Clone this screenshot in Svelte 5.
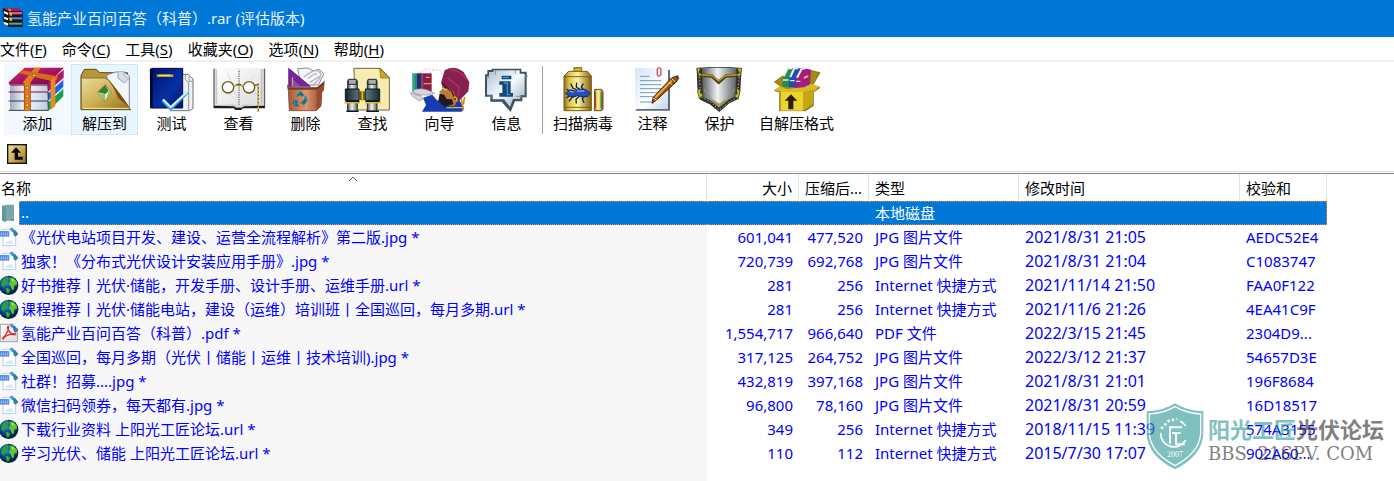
<script lang="ts">
    type Kind = 'jpg' | 'url' | 'pdf';

    const menus = [
        { label: '文件', key: 'F' },
        { label: '命令', key: 'C' },
        { label: '工具', key: 'S' },
        { label: '收藏夹', key: 'O' },
        { label: '选项', key: 'N' },
        { label: '帮助', key: 'H' }
    ];

    // origin is the left edge of each icon's own drawing space
    const archiveTools = [
        { icon: 'add', label: '添加', origin: 28 },
        { icon: 'extract', label: '解压到', origin: 229 },
        { icon: 'test', label: '测试', origin: 430 },
        { icon: 'view', label: '查看', origin: 16 },
        { icon: 'delete', label: '删除', origin: 217 },
        { icon: 'find', label: '查找', origin: 418 },
        { icon: 'wizard', label: '向导', origin: 49 },
        { icon: 'info', label: '信息', origin: 250 }
    ];

    const extraTools = [
        { icon: 'scan', label: '扫描病毒', origin: 45 },
        { icon: 'comment', label: '注释', origin: 253 },
        { icon: 'protect', label: '保护', origin: 4 },
        { icon: 'sfx', label: '自解压格式', origin: 234 }
    ];

    const typeNames = { jpg: 'JPG 图片文件', url: 'Internet 快捷方式', pdf: 'PDF 文件' };

    const files: { kind: Kind; name: string; size: string; packed: string; modified: string; crc: string }[] = [
        { kind: 'jpg', name: '《光伏电站项目开发、建设、运营全流程解析》第二版.jpg *', size: '601,041', packed: '477,520', modified: '2021/8/31 21:05', crc: 'AEDC52E4' },
        { kind: 'jpg', name: '独家！《分布式光伏设计安装应用手册》.jpg *', size: '720,739', packed: '692,768', modified: '2021/8/31 21:04', crc: 'C1083747' },
        { kind: 'url', name: '好书推荐丨光伏·储能，开发手册、设计手册、运维手册.url *', size: '281', packed: '256', modified: '2021/11/14 21:50', crc: 'FAA0F122' },
        { kind: 'url', name: '课程推荐丨光伏·储能电站，建设（运维）培训班丨全国巡回，每月多期.url *', size: '281', packed: '256', modified: '2021/11/6 21:26', crc: '4EA41C9F' },
        { kind: 'pdf', name: '氢能产业百问百答（科普）.pdf *', size: '1,554,717', packed: '966,640', modified: '2022/3/15 21:45', crc: '2304D9...' },
        { kind: 'jpg', name: '全国巡回，每月多期（光伏丨储能丨运维丨技术培训).jpg *', size: '317,125', packed: '264,752', modified: '2022/3/12 21:37', crc: '54657D3E' },
        { kind: 'jpg', name: '社群！招募....jpg *', size: '432,819', packed: '397,168', modified: '2021/8/31 21:01', crc: '196F8684' },
        { kind: 'jpg', name: '微信扫码领券，每天都有.jpg *', size: '96,800', packed: '78,160', modified: '2021/8/31 20:59', crc: '16D18517' },
        { kind: 'url', name: '下载行业资料 上阳光工匠论坛.url *', size: '349', packed: '256', modified: '2018/11/15 11:39', crc: '574A3155' },
        { kind: 'url', name: '学习光伏、储能 上阳光工匠论坛.url *', size: '110', packed: '112', modified: '2015/7/30 17:07', crc: '902A60...' }
    ];
</script>

{#snippet toolButton(tool)}
    <button class="tool {tool.icon}">
        <svg width="56" height="45" viewBox="{tool.origin} 20 168 135" aria-hidden="true">
            {#if tool.icon === 'add'}
                <path d="M140 124L188 84V108L143 152Z" fill="#12a04e" />
                <path d="M140 97L188 57V80L143 122Z" fill="#1f63e0" />
                <path d="M138 70L189 28V52L143 95Z" fill="#b01869" />
                <path d="M28 72H140V150H28Z" fill="url(#pages)" />
                <path d="M24 66L72 22H190L140 72H28Z" fill="url(#magenta)" />
                <path d="M24 69L30 74H140" fill="none" stroke="#5e0737" stroke-width="3" />
                <path d="M24 95H142" stroke="#7c0b45" stroke-width="3" />
                <path d="M24 122H142" stroke="#16367c" stroke-width="3" />
                <path d="M24 150H142" stroke="#1b4a35" stroke-width="3" />
                <path d="M142 72V151" stroke="#1b2940" stroke-width="2" />
                <path d="M144 96L188 56M144 123L188 83" stroke="#dfe5f2" stroke-width="4" />
                <path d="M67 66L102 22H121L90 66V151H70V70Z" fill="#e57a1e" />
                <path d="M54 38L66 30L172 48L168 58L152 62Z" fill="#d56a17" />
                <path d="M150 60L164 49V137L150 149Z" fill="#e98b25" />
                <path d="M71 70V150M89 70V150" stroke="#8c3e08" stroke-width="2" />
                <g fill="#ffe36b" stroke="#8b6910" stroke-width="2">
                    <rect x="76" y="78" width="7" height="8" /><rect x="76" y="104" width="7" height="8" /><rect x="76" y="131" width="7" height="8" /><rect x="96" y="42" width="9" height="6" />
                </g>
            {:else if tool.icon === 'extract'}
                <path d="M241 46L251 27H287L297 37H380V140L390 148H241Z" fill="#b8973a" stroke="#5c480e" stroke-width="3" />
                <path d="M318 44L344 35H371L386 48V140H330Z" fill="#f2f5f9" stroke="#788596" stroke-width="3" />
                <path d="M352 36V54L372 68L384 55L370 44V36" fill="#d5dde7" stroke="#788596" stroke-width="2" />
                <path d="M242 53H312L326 60L388 147H242Z" fill="url(#gold)" stroke="#65500f" stroke-width="2" />
                <path d="M318 54Q350 86 388 143L352 112Q338 76 318 54Z" fill="#7b4c0b" />
                <path d="M246 144H385" stroke="#fff19c" stroke-width="3" />
                <path d="M314 72L332 97L314 123L290 97Z" fill="#edf4db" stroke="#607238" stroke-width="2" />
                <path d="M314 73L324 92L314 101L291 96Z" fill="#477a26" />
                <path d="M291 98L313 101L315 121ZM324 92L331 97L316 120Z" fill="#8fc861" />
            {:else if tool.icon === 'test'}
                <path d="M510 42H562L577 56V145L566 151H510Z" fill="#edf1f4" stroke="#6b7378" stroke-width="3" />
                <path d="M554 44V57L564 68V150M565 49V63H577" fill="none" stroke="#8b949b" stroke-width="3" />
                <path d="M449 26L457 24H546V143H450Z" fill="url(#navy)" stroke="#020b45" stroke-width="3" />
                <path d="M449 26H456V142H449Z" fill="#00072f" />
                <rect x="468" y="42" width="50" height="8" fill="#b7a321" />
                <path d="M475 45H510" stroke="#ffef75" stroke-width="3" />
                <path d="M486 119L510 145L560 96" fill="none" stroke="#3d9de5" stroke-width="10" />
                <path d="M487 117L510 140L560 94" fill="none" stroke="#d3f3ff" stroke-width="6" />
            {:else if tool.icon === 'view'}
                <path d="M24 25H178V143H112L106 148H90L84 143H24Z" fill="#cfcfcf" />
                <path d="M24 136L84 138L92 142H108L116 138L178 136V144H112L106 149H90L84 144H24Z" fill="#1c1c1c" />
                <path d="M30 24H94L100 32L106 24H170V134L112 132L100 140L88 132L30 134Z" fill="url(#paper)" />
                <path d="M25 25V140M177 25V140" stroke="#4c4c4c" stroke-width="3" />
                <path d="M33 27V132M167 27V132" stroke="#a3a3a3" stroke-width="2" />
                <path d="M100 32V138" stroke="#4a4a4a" stroke-width="3" stroke-dasharray="4 3" />
                <path d="M65 37L96 112M72 99L94 124M110 116L158 96M109 105L149 40" stroke="#dedede" stroke-width="3" />
                <g fill="none" stroke="#6d5a1c" stroke-width="4">
                    <circle cx="67" cy="81" r="17" fill="#fff" /><circle cx="130" cy="81" r="17" fill="#fff" /><path d="M84 79Q99 66 113 79M147 75L158 72V155" />
                </g>
                <path d="M158 74V155" stroke="#d6bd4b" stroke-width="4" stroke-dasharray="7 4" />
                <path d="M84 76H91M107 76H114" stroke="#e8c83c" stroke-width="5" />
            {:else if tool.icon === 'delete'}
                <path d="M276 25L309 23L322 32L340 27L355 40L338 74H286Z" fill="#f5f5fa" stroke="#8b8b96" stroke-width="3" />
                <path d="M295 50Q333 19 343 37Q353 50 319 76M307 55Q328 35 334 43M312 67L342 48" fill="none" stroke="#b6b6bf" stroke-width="4" />
                <path d="M249 24L314 78H249Z" fill="#7624a3" stroke="#411160" stroke-width="2" />
                <path d="M258 77V52L286 77" fill="#8f45b8" stroke="#572070" stroke-width="2" />
                <path d="M260 50V76" stroke="#ffc31e" stroke-width="3" />
                <path d="M245 75L260 82H336L356 63L353 91L348 96L346 137L331 151H251L248 91Z" fill="url(#copper)" stroke="#733119" stroke-width="2" />
                <path d="M248 85H333L354 70" fill="none" stroke="#783b25" stroke-width="7" />
                <path d="M333 91L350 77L346 137L332 151Z" fill="#9b4b28" />
                <path d="M272 103L284 92L296 104L288 109L282 104L276 110ZM299 105L306 120L294 136L290 129L283 130L294 119ZM264 119L277 121L274 130L282 138H269L261 128Z" fill="#087a87" />
                <path d="M272 105L282 95M296 109L303 121M265 121L269 133" stroke="#3fa9ac" stroke-width="3" />
            {:else if tool.icon === 'find'}
                <path d="M445 24H524L551 52V149H447Z" fill="#f7edb4" stroke="#746734" stroke-width="3" />
                <path d="M522 25L551 53H525Z" fill="#d2a51d" stroke="#806615" stroke-width="2" />
                <rect x="426" y="62" width="29" height="90" fill="url(#steel)" stroke="#252b30" stroke-width="3" />
                <rect x="485" y="62" width="29" height="90" fill="url(#steel)" stroke="#252b30" stroke-width="3" />
                <path d="M428 57H452V72H428ZM487 57H512V72H487Z" fill="#a7aeb1" stroke="#20262a" stroke-width="3" />
                <path d="M419 86H460V121H419ZM479 86H522V121H479Z" fill="url(#scope)" stroke="#111" stroke-width="3" />
                <path d="M460 93H479V119H460Z" fill="#665616" />
                <path d="M470 91V123M416 127H463M478 127H526" stroke="#d8ba2d" stroke-width="5" />
                <path d="M420 123H461M480 123H522M422 153H459M482 153H520" stroke="#161616" stroke-width="4" />
            {:else if tool.icon === 'wizard'}
                <path d="M68 37L90 26L133 30L147 53M73 35L93 44L115 29" fill="none" stroke="#dadada" stroke-width="5" stroke-dasharray="5 6" />
                <path d="M50 39H64V96H50Z" fill="#238b7b" /><path d="M64 39H79V97H64Z" fill="#39206b" /><path d="M79 39H108V96H79Z" fill="#8d194a" />
                <path d="M55 40V95M79 41V95" stroke="#52cebb" stroke-width="2" />
                <path d="M90 51H102M84 70H108" stroke="#e0a24a" stroke-width="4" />
                <path d="M51 90Q76 80 103 92L116 99L101 104H60ZM73 103L82 118L69 121L51 108L44 97L57 100Z" fill="#d6d6d6" stroke="#898989" stroke-width="2" />
                <path d="M82 112L110 103L124 120L151 127L190 118L206 143L198 154H79L91 134Z" fill="#173cb1" />
                <path d="M147 56L185 69L188 103L178 136H158L152 125L134 119L142 104L130 94L140 87L138 70Z" fill="#bc7b2e" />
                <path d="M136 67L147 30Q174 12 204 35L221 66L218 93L187 125L172 92L143 72Z" fill="#872051" />
                <path d="M163 28Q191 28 211 56M155 52L190 80L188 107" fill="none" stroke="#a92d66" stroke-width="5" />
                <path d="M138 69L168 93L180 118M139 69L151 85" fill="none" stroke="#441629" stroke-width="4" />
                <path d="M132 99L146 104L153 116L169 117L174 132L146 139L128 122Z" fill="#211820" />
                <path d="M143 84L153 89" stroke="#fff0cc" stroke-width="3" />
                <path d="M175 110Q187 111 183 124M153 142H204" fill="none" stroke="#e1bd24" stroke-width="4" />
                <path d="M197 115L203 150M207 110L203 132" stroke="#ca8b39" stroke-width="5" />
            {:else if tool.icon === 'info'}
                <path d="M275 29H288V25H377V34H393V111H380V123H358L345 155L318 124H284V109H268V42H275Z" fill="#3e515c" />
                <path d="M280 35H293V30H372V40H387V105H374V116H352L343 140L325 117H291V103H274V48H280Z" fill="url(#bubble)" />
                <path d="M299 43V30M281 52H271M291 107H276M362 108H378M388 48H397M359 29V40" stroke="#7d93a5" stroke-width="3" />
                <path d="M318 46H347V57H318ZM311 63H345V98H352V109H311V98H320V73H311Z" fill="#164778" />
                <path d="M322 51H339M324 68H335V103H344" fill="none" stroke="#3e91c8" stroke-width="4" />
            {:else if tool.icon === 'scan'}
                <path d="M102 22H125V36H102Z" fill="#d6b31b" stroke="#776515" stroke-width="3" />
                <path d="M72 47L86 33H142L154 47V151H72Z" fill="url(#can)" stroke="#715c1d" stroke-width="3" />
                <path d="M72 49H154M72 141H154" stroke="#7c6412" stroke-width="3" />
                <path d="M164 87H185L189 94V146L185 151H163Z" fill="url(#can)" stroke="#664f15" stroke-width="3" />
                <path d="M165 96V143" stroke="#a33a22" stroke-width="5" /><path d="M184 96V143" stroke="#3c8a3c" stroke-width="4" />
                <path d="M92 70L99 84L110 88M110 67L109 80L119 87M130 70L124 80L130 88M87 123L96 111L107 107M109 130L108 117L119 106M132 127L127 115L134 106M80 86L91 95M79 113L91 105" fill="none" stroke="#10204c" stroke-width="4" />
                <path d="M77 99L91 88L106 92L116 87H136L151 98L144 108L128 110L113 106L99 110L85 106Z" fill="#2450b5" stroke="#102d77" stroke-width="3" />
                <path d="M89 93L101 95M111 92H133" stroke="#6fa6f2" stroke-width="4" />
            {:else if tool.icon === 'comment'}
                <path d="M290 29H388V151H283L289 145Z" fill="#606b78" />
                <path d="M283 24H382V146H283Z" fill="url(#note)" />
                <path d="M298 48H327M298 61H362M298 73H362M298 85H362M298 97H362M298 109H343M298 125H340" stroke="#7099bd" stroke-width="3" />
                <path d="M350 44V27Q355 17 361 27V42Q354 52 350 44V31" fill="none" stroke="#d34f5a" stroke-width="4" />
                <path d="M334 129L337 112L391 54L411 46L409 63L391 79L349 118Z" fill="#9b4f13" stroke="#512c0d" stroke-width="3" />
                <path d="M344 112L393 61" stroke="#efad48" stroke-width="6" />
                <path d="M393 55L408 67M386 66L397 75M338 114L348 119" stroke="#f0dd97" stroke-width="3" />
                <path d="M411 47L414 55L393 77" fill="none" stroke="#34291c" stroke-width="3" />
            {:else if tool.icon === 'protect'}
                <path d="M18 24L53 20H119L153 24L149 92L143 116L116 129L86 155L57 132L28 118L20 82Z" fill="#33352c" />
                <path d="M34 22H137L134 108L106 121L85 141L63 122L37 109Z" fill="url(#steel)" />
                <path d="M30 44L64 47L84 66L105 47L142 44" fill="none" stroke="#4d3a10" stroke-width="10" />
                <path d="M30 43L65 46L84 62L104 46L142 43" fill="none" stroke="#b3903a" stroke-width="5" />
                <path d="M40 86L62 120L86 138L109 120L131 86" fill="none" stroke="#8a8f92" stroke-width="4" />
                <path d="M65 119L86 133L106 118" fill="none" stroke="#b29645" stroke-width="5" />
                <path d="M26 50L28 81L34 111L61 125L86 149L113 127L139 111L146 50" fill="none" stroke="#e2e1b6" stroke-width="3" stroke-dasharray="3 7" />
                <path d="M18 24L30 22L25 36L34 44L25 49ZM153 24L139 23L146 37L137 46L148 49ZM20 91L31 82L29 98L38 104L26 115ZM148 91L138 82L139 101L130 107L143 115Z" fill="#c4bb30" stroke="#343510" stroke-width="2" />
            {:else}
                <path d="M250 65L276 46L297 60L358 30L387 37L363 78L386 82L367 96V136L344 151H266V95L251 91L269 78Z" fill="#a58b10" stroke="#63540b" stroke-width="2" />
                <path d="M273 78L276 50L290 22L312 24L300 82Z" fill="#238d54" /><path d="M293 80L297 50L310 23L330 24L320 82Z" fill="#254aba" /><path d="M312 82L318 50L334 22L360 28L357 72L345 82Z" fill="#a51c80" />
                <path d="M278 48L290 24H304M298 50L310 24H322M318 52L332 25L344 24" fill="none" stroke="#f0edf1" stroke-width="6" />
                <path d="M276 59H292M297 61H311M316 63H328" stroke="#f6e8dd" stroke-width="4" />
                <path d="M338 50L352 44V50L338 56Z" fill="#e7be34" />
                <path d="M250 88L268 78L287 86L339 81L359 71L386 78L366 95H270Z" fill="#d9bb22" />
                <path d="M269 95H336V151H269Z" fill="#ead52f" /><path d="M336 95L367 87V130L336 151Z" fill="#c5a716" />
                <path d="M300 102L319 121H307V147H292V121H281Z" fill="#2b1d00" />
            {/if}
        </svg>
        <span>{tool.label}</span>
    </button>
{/snippet}

{#snippet fileIcon(kind)}
    <svg class="file-icon" width="19" height="20" viewBox="0 0 57 60" aria-hidden="true">
        {#if kind === 'jpg'}
            <path d="M9 7H31L47 23V56H9Z" fill="#fbfdff" stroke="#b6cfed" stroke-width="3" />
            <path d="M16 50Q18 42 24 44Q30 36 36 44Q41 45 42 50Z" fill="#d5e6fa" />
            <rect y="12" width="28" height="17" fill="#5c94df" />
            <path d="M5 17V25M11 17V25M17 17V25M22 17V25" stroke="#a9c8f3" stroke-width="2" />
            <path d="M28 7L37 1L43 10L36 15Z" fill="#4a9ad6" />
            <path d="M37 11L44 8L55 20L47 29L42 25Z" fill="#2f7db4" />
        {:else if kind === 'url'}
            <circle cx="26" cy="31" r="29" fill="url(#globe)" />
            <path d="M4 22Q10 8 24 5L27 12L20 19L21 27L14 32L11 38L5 32Z" fill="#2ba32a" />
            <path d="M29 8L40 8L51 20L50 32L44 31L42 42L36 46L32 34L26 27L31 20Z" fill="#5ac72c" />
            <path d="M17 39L28 41L30 48L24 56L19 50Z" fill="#39ad2b" />
            <path d="M35 13L43 19" stroke="#a8e868" stroke-width="4" />
        {:else if kind === 'pdf'}
            <path d="M1 4H37L52 19V56H1Z" fill="url(#paper)" stroke="#a4a4a4" stroke-width="3" />
            <path d="M8 46C21 36 30 9 24 10C18 13 30 36 46 35C54 28 13 35 10 48Z" fill="none" stroke="#e02d2d" stroke-width="4" />
            <path d="M28 7L37 1L43 10L36 15Z" fill="#4a9ad6" />
            <path d="M37 11L44 8L55 20L47 29L42 25Z" fill="#2f7db4" />
        {:else}
            <path d="M6 8L18 5H42V53H18L15 57L6 52Z" fill="#79a9a7" />
            <path d="M6 8L18 13V57L6 52Z" fill="#5c9a9c" /><path d="M33 49H42V53H33Z" fill="#458b7e" />
        {/if}
    </svg>
{/snippet}

<svg class="defs" aria-hidden="true">
    <defs>
        <linearGradient id="magenta" x2="1" y2="1"><stop stop-color="#d6237b" /><stop offset="1" stop-color="#75054a" /></linearGradient>
        <linearGradient id="pages"><stop stop-color="#a3abb9" /><stop offset=".4" stop-color="#f7f9ff" /><stop offset="1" stop-color="#c5ccda" /></linearGradient>
        <linearGradient id="gold" x2="1" y2="1"><stop stop-color="#ecdc9a" /><stop offset=".5" stop-color="#cdb155" /><stop offset="1" stop-color="#8f7120" /></linearGradient>
        <linearGradient id="navy" x2="1" y2="1"><stop stop-color="#001067" /><stop offset=".6" stop-color="#0730a4" /><stop offset="1" stop-color="#001765" /></linearGradient>
        <linearGradient id="paper" x2="1" y2="1"><stop stop-color="#fff" /><stop offset="1" stop-color="#dcdcdc" /></linearGradient>
        <linearGradient id="copper"><stop stop-color="#a75734" /><stop offset=".5" stop-color="#dd9572" /><stop offset="1" stop-color="#8d4225" /></linearGradient>
        <linearGradient id="steel"><stop stop-color="#55595b" /><stop offset=".45" stop-color="#f1f3f3" /><stop offset="1" stop-color="#5c6164" /></linearGradient>
        <linearGradient id="scope"><stop stop-color="#15252b" /><stop offset=".5" stop-color="#698e92" /><stop offset="1" stop-color="#172a31" /></linearGradient>
        <linearGradient id="bubble" x2="1" y2="1"><stop stop-color="#aebfd2" /><stop offset=".5" stop-color="#f5fbff" /><stop offset="1" stop-color="#91a7bb" /></linearGradient>
        <linearGradient id="can"><stop stop-color="#88701a" /><stop offset=".2" stop-color="#e2c64c" /><stop offset=".5" stop-color="#fff2a0" /><stop offset="1" stop-color="#82620e" /></linearGradient>
        <linearGradient id="note" x2="1" y2="1"><stop stop-color="#d3e4f7" /><stop offset=".6" stop-color="#fff" /><stop offset="1" stop-color="#bfd3e8" /></linearGradient>
        <radialGradient id="globe" cx=".35" cy=".35"><stop stop-color="#3990df" /><stop offset=".6" stop-color="#0b4d9f" /><stop offset="1" stop-color="#052553" /></radialGradient>
    </defs>
</svg>

<div class="window">
    <header class="title-bar">
        <svg width="21" height="21" viewBox="0 0 63 63" aria-hidden="true">
            <path d="M4 3H47L62 14V60H19L5 47L1 31L7 27L1 15Z" fill="#17141a" />
            <path d="M4 3H47L61 12H19Z" fill="#a52161" /><path d="M20 15H60V22H20Z" fill="#db5898" />
            <path d="M20 31H60V37H20Z" fill="#5e8cdb" /><path d="M20 47H60V53H20Z" fill="#3fb195" />
            <path d="M6 12L18 17V24L5 18ZM5 29L18 33V40L6 35ZM5 44L18 49V56L6 51Z" fill="#fff" />
            <path d="M18 4L27 8V14L20 10M23 17H30V26H23ZM23 32H30V42H23Z" fill="#e6ae24" />
        </svg>
        <h1>氢能产业百问百答（科普）.rar (评估版本)</h1>
    </header>

    <nav class="menu-bar">
        {#each menus as menu}
            <button>{menu.label}(<u>{menu.key}</u>)</button>
        {/each}
    </nav>

    <div class="toolbar" role="toolbar" aria-label="工具栏">
        {#each archiveTools as tool}
            {@render toolButton(tool)}
        {/each}
        <span class="separator"></span>
        {#each extraTools as tool}
            {@render toolButton(tool)}
        {/each}
    </div>

    <div class="path-bar">
        <button aria-label="向上">
            <svg width="20" height="20" viewBox="0 0 60 60" aria-hidden="true">
                <rect width="60" height="60" fill="#111" /><rect x="4" y="4" width="52" height="52" fill="url(#gold)" />
                <path d="M27 10L42 26H33V38H47V47H23V26H12Z" fill="#050505" />
            </svg>
        </button>
    </div>

    <main class="file-list">
        <table>
            <colgroup>
                <col />
                <col class="w-size" />
                <col class="w-packed" />
                <col class="w-type" />
                <col class="w-modified" />
                <col class="w-crc" />
                <col class="w-rest" />
            </colgroup>
            <thead>
                <tr>
                    <th class="name">名称<svg class="sort" width="10" height="6" viewBox="0 0 10 6" aria-hidden="true"><path d="M1 5L5 1L9 5" fill="none" stroke="#555" /></svg></th>
                    <th class="num">大小</th>
                    <th class="num">压缩后...</th>
                    <th>类型</th>
                    <th>修改时间</th>
                    <th>校验和</th>
                    <td></td>
                </tr>
            </thead>
            <tbody>
                <tr class="selected">
                    <td class="name"><div class="entry">{@render fileIcon('folder')}<span>..</span></div></td>
                    <td></td>
                    <td></td>
                    <td>本地磁盘</td>
                    <td></td>
                    <td class="last"></td>
                    <td class="rest"></td>
                </tr>
                {#each files as file}
                    <tr>
                        <td class="name"><div class="entry">{@render fileIcon(file.kind)}<span>{file.name}</span></div></td>
                        <td class="num">{file.size}</td>
                        <td class="num">{file.packed}</td>
                        <td>{typeNames[file.kind]}</td>
                        <td class="date">{file.modified}</td>
                        <td>{file.crc}</td>
                        <td></td>
                    </tr>
                {/each}
                <tr class="filler"><td class="name"></td><td colspan="6"></td></tr>
            </tbody>
        </table>
    </main>

    <aside class="watermark">
        <svg width="58" height="67" viewBox="0 0 174 201" aria-hidden="true">
            <path d="M87 1Q120 23 172 25V92Q169 158 87 199Q5 158 2 92V25Q54 23 87 1Z" fill="#339a9a" />
            <path d="M87 11Q121 31 164 33V91Q161 149 87 188Q13 149 10 91V33Q53 31 87 11Z" fill="none" stroke="#fff" stroke-width="4" />
            <path d="M44 90A40 40 0 0 0 119 111M102 54A40 40 0 0 1 119 69" fill="none" stroke="#fff" stroke-width="5" />
            <path d="M46 77L69 53L94 48" fill="none" stroke="#fff" stroke-width="8" stroke-dasharray="7 7" />
            <path d="M108 73H72V122M78 90H104M90 90V124H116" fill="none" stroke="#fff" stroke-width="6" />
            <text x="87" y="163" text-anchor="middle" fill="#fff">2007</text>
        </svg>
        <div class="brand">
            <strong><em>阳光工匠</em>光伏论坛</strong>
            <small>BBS. 21SPV. COM</small>
        </div>
    </aside>
</div>

<style>
    :global(body) {
        margin: 0;
        background: #fff;
    }

    .window {
        position: relative;
        min-height: 100vh;
        display: flex;
        flex-direction: column;
        overflow: hidden;
        font-family: 'Noto Sans', 'Noto Sans CJK SC', sans-serif;
        font-size: 15px;
        line-height: 22px;
        color: #000;
    }

    .defs {
        position: absolute;
        width: 0;
        height: 0;
    }

    button {
        margin: 0;
        padding: 0;
        border: 0;
        background: none;
        font: inherit;
        color: inherit;
    }

    .title-bar {
        display: flex;
        align-items: center;
        gap: 4px;
        height: 35px;
        padding: 0 2px 2px;
        background: #0078d7;
        color: #e6f2fc;
    }

    h1 {
        margin: 0;
        font-size: 15px;
        font-weight: 400;
    }

    .menu-bar {
        display: flex;
        gap: 15px;
        height: 23px;
        border-bottom: 2px solid #f0f0f0;
    }

    u {
        text-underline-offset: 2px;
    }

    .toolbar {
        display: flex;
        padding: 2px 4px 0;
    }

    .tool {
        box-sizing: border-box;
        min-width: 67px;
        height: 71px;
        padding: 2px 5px 0;
        border: 1px solid transparent;
        display: flex;
        flex-direction: column;
        align-items: center;
        white-space: nowrap;
    }

    .tool svg {
        margin: 0 -2px;
        overflow: visible;
    }

    .tool.add {
        background: #f3f9ff;
    }

    .tool.extract {
        background: #e9f5ff;
        border-color: #cce8ff;
    }

    .separator {
        width: 1px;
        height: 68px;
        margin: 2px 4px 0 2px;
        background: #a0a0a0;
    }

    .path-bar {
        padding: 9px 7px 7px;
        border-bottom: 1px solid #dcdcdc;
    }

    .path-bar button,
    .path-bar svg {
        display: block;
    }

    .file-list {
        margin-top: 1px;
        border-top: 1px solid #828790;
    }

    table {
        width: 100%;
        table-layout: fixed;
        border-spacing: 0;
        color: #00f;
    }

    .w-size { width: 92px; }
    .w-packed { width: 70px; }
    .w-type { width: 150px; }
    .w-modified { width: 221px; }
    .w-crc { width: 87px; }
    .w-rest { width: 67px; }

    th,
    td {
        box-sizing: border-box;
        height: 24px;
        padding: 0 6px;
        text-align: left;
        white-space: nowrap;
    }

    th {
        position: relative;
        height: 27px;
        border-right: 1px solid #e2e2e2;
        color: #000;
        font-weight: 400;
    }

    th.name {
        padding-left: 1px;
    }

    .num {
        text-align: right;
    }

    .date {
        font-size: 16px;
    }

    .sort {
        position: absolute;
        top: 2px;
        left: 0;
        right: 0;
        margin: 0 auto;
    }

    td.name {
        padding: 0;
        background: #f7f7f7;
    }

    .entry {
        display: flex;
        align-items: center;
        height: 24px;
    }

    .entry span {
        flex: 1;
        padding-left: 2px;
    }

    .selected td {
        background: #0078d7;
        color: #fff;
        border-top: 1px dotted #ff8728;
        border-bottom: 1px dotted #ff8728;
        line-height: 20px;
    }

    .selected td.name {
        border: 0;
    }

    .selected .file-icon {
        background: #fff;
        height: 24px;
    }

    .selected .entry span {
        box-sizing: border-box;
        height: 24px;
        border: 1px dotted #ff8728;
        border-right: 0;
        background: #0078d7;
        padding-left: 1px;
    }

    .selected td.last {
        border-right: 1px dotted #ff8728;
    }

    .selected td.rest {
        border: 0;
        background: none;
    }

    .filler td {
        height: 16px;
    }

    .watermark {
        position: absolute;
        right: 10px;
        bottom: 11px;
        display: flex;
        gap: 4px;
        opacity: 0.62;
        color: #333;
    }

    .watermark text {
        font-family: 'Liberation Serif', serif;
        font-size: 24px;
    }

    .brand {
        display: flex;
        flex-direction: column;
        justify-content: center;
    }

    .brand strong {
        font-size: 22px;
        line-height: 34px;
        font-weight: 700;
    }

    .brand em {
        font-style: normal;
        color: #339a9a;
    }

    .brand small {
        font-family: 'DejaVu Serif', serif;
        font-size: 18px;
        line-height: 16px;
        white-space: nowrap;
    }
</style>
